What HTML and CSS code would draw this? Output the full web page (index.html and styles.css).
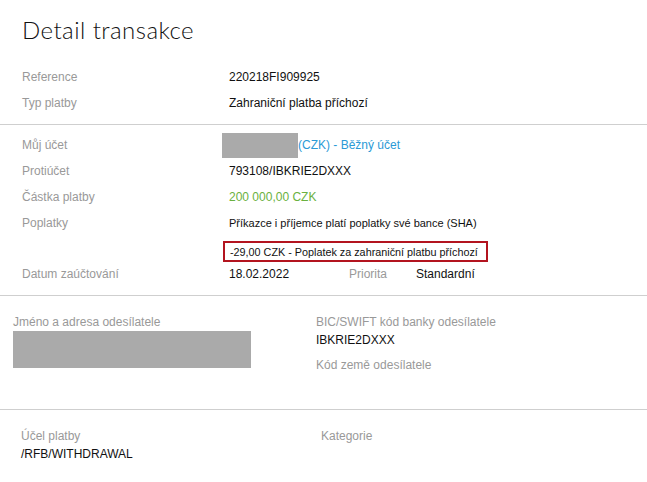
FILE: index.html
```html
<!DOCTYPE html>
<html lang="cs">
<head>
  <meta charset="UTF-8">
  <title>Detail transakce</title>
  <link rel="stylesheet" href="styles.css">
</head>
<body>
  <div class="detail">
    <h1 class="title">Detail transakce</h1>

    <div class="section top">
      <div class="row">
        <span class="label">Reference</span>
        <span class="value">220218FI909925</span>
      </div>
      <div class="row">
        <span class="label">Typ platby</span>
        <span class="value">Zahraniční platba příchozí</span>
      </div>
    </div>

    <div class="section main">
      <div class="row">
        <span class="label">Můj účet</span>
        <span class="value"><span class="mask account"></span><span class="link">(CZK) - Běžný účet</span></span>
      </div>
      <div class="row">
        <span class="label">Protiúčet</span>
        <span class="value">793108/IBKRIE2DXXX</span>
      </div>
      <div class="row">
        <span class="label">Částka platby</span>
        <span class="value amount">200 000,00 CZK</span>
      </div>
      <div class="row">
        <span class="label">Poplatky</span>
        <span class="value small">Příkazce i příjemce platí poplatky své bance (SHA)</span>
      </div>
      <div class="row fee-row">
        <span class="label"></span>
        <span class="value"><span class="fee small">-29,00 CZK - Poplatek za zahraniční platbu příchozí</span></span>
      </div>
      <div class="row last">
        <span class="label">Datum zaúčtování</span>
        <span class="value date">18.02.2022</span>
        <span class="label prio">Priorita</span>
        <span class="value">Standardní</span>
      </div>
    </div>

    <div class="section sender">
      <div class="col left">
        <div class="field-label">Jméno a adresa odesílatele</div>
        <div class="mask address"></div>
      </div>
      <div class="col right">
        <div class="field-label">BIC/SWIFT kód banky odesílatele</div>
        <div class="field-value">IBKRIE2DXXX</div>
        <div class="field-label gap">Kód země odesílatele</div>
      </div>
    </div>

    <div class="section purpose">
      <div class="col left">
        <div class="field-label">Účel platby</div>
        <div class="field-value">/RFB/WITHDRAWAL</div>
      </div>
      <div class="col right">
        <div class="field-label">Kategorie</div>
      </div>
    </div>
  </div>
</body>
</html>
```

FILE: styles.css
```css
body {
  margin: 0;
  padding: 0;
  background: #ffffff;
  font-family: "Liberation Sans", Arial, sans-serif;
  font-size: 12px;
  color: #111;
}
.detail {
  width: 647px;
}
.title {
  margin: 0;
  padding: 15px 0 0 22px;
  font-family: Lato, "DejaVu Sans", sans-serif;
  font-weight: 300;
  font-size: 24px;
  letter-spacing: 0.45px;
  line-height: 30px;
  color: #111;
}
.section {
  border-bottom: 1px solid #cfcfcf;
}
.top {
  margin-top: 19px;
  padding: 0 0 8px 22px;
}
.main {
  padding: 7px 0 9px 22px;
}
.row {
  display: flex;
  align-items: center;
  height: 26px;
}
.row.last {
  height: 24px;
}
.fee-row {
  height: 21px;
  margin-top: 5px;
}
.label {
  width: 207px;
  color: #999;
  flex-shrink: 0;
}
.value {
  display: flex;
  align-items: center;
  color: #111;
}
.small {
  font-size: 11px;
}
.mask {
  background: #aaaaaa;
}
.account {
  width: 76px;
  height: 25px;
  margin-left: -7px;
}
.link {
  color: #2a9ad6;
}
.amount {
  color: #6ab140;
}
.fee {
  margin-left: -6px;
  padding: 0 8px 0 5px;
  height: 21px;
  border: 2px solid #b3141f;
  box-sizing: border-box;
  display: flex;
  align-items: center;
  font-size: 10.8px;
}
.date {
  width: 120px;
}
.prio {
  width: 67px;
}
.sender,
.purpose {
  display: flex;
}
.sender {
  height: 114px;
  padding-top: 18px;
  box-sizing: border-box;
}
.purpose {
  padding-top: 18px;
  height: 71px;
  box-sizing: border-box;
  border-bottom: none;
}
.sender .left {
  padding-left: 13px;
  width: 303px;
}
.purpose .left {
  padding-left: 21px;
  width: 300px;
}
.field-label {
  color: #999;
  line-height: 16px;
}
.field-value {
  color: #111;
  line-height: 20px;
}
.gap {
  margin-top: 7px;
}
.address {
  width: 238px;
  height: 37px;
  margin-top: 1px;
}
```
